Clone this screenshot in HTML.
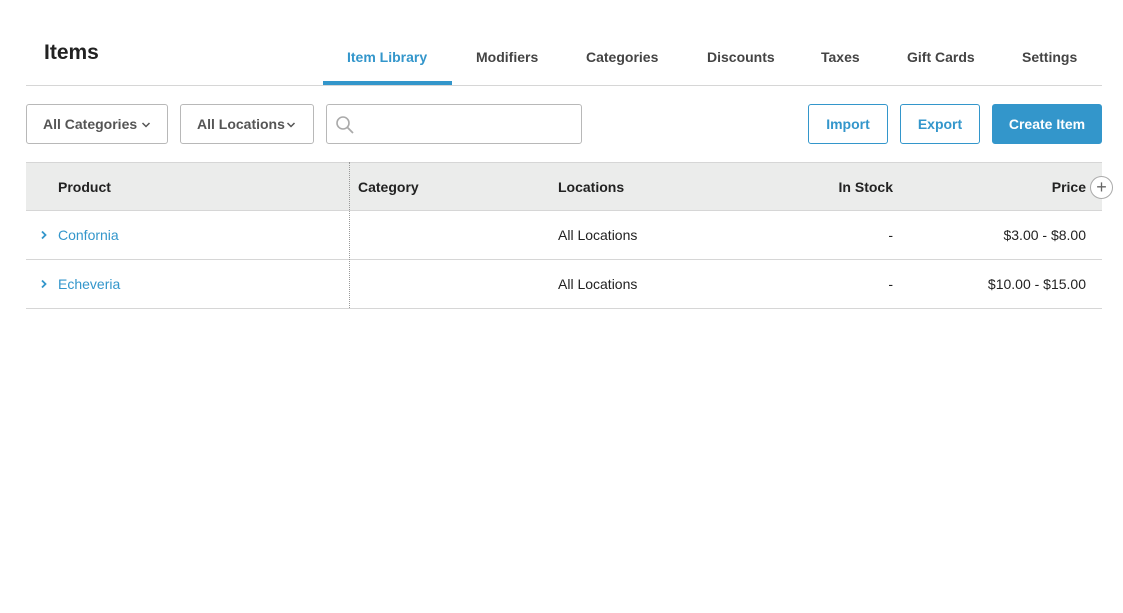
<!DOCTYPE html>
<html><head><style>
body{margin:0;width:1123px;height:613px;background:#fff;font-family:"Liberation Sans",sans-serif;color:#333;position:relative;overflow:hidden}
.a{position:absolute;white-space:nowrap}
.tab{position:absolute;top:49px;font-size:14px;font-weight:bold;color:#444}
.box{position:absolute;border:1px solid #b8b8b8;border-radius:3px;box-sizing:border-box;height:40px;top:104px}
.btn{position:absolute;top:104px;height:40px;box-sizing:border-box;border:1px solid #3396cb;border-radius:3px;color:#3396cb;font-size:14px;font-weight:bold;text-align:center;line-height:38px}
.hd{font-size:14px;font-weight:bold;color:#222}
.c{font-size:14px;color:#222}
.l{font-size:14px;color:#3396cb}
</style></head><body>
<div class="a" style="left:44px;top:41px;font-size:21px;font-weight:bold;color:#222">Items</div>
<div class="tab" style="left:347px;color:#3396cb">Item Library</div>
<div class="tab" style="left:476px">Modifiers</div>
<div class="tab" style="left:586px">Categories</div>
<div class="tab" style="left:707px">Discounts</div>
<div class="tab" style="left:821px">Taxes</div>
<div class="tab" style="left:907px">Gift Cards</div>
<div class="tab" style="left:1022px">Settings</div>
<div class="a" style="left:26px;top:85px;width:1076px;height:1px;background:#d6d6d6"></div>
<div class="a" style="left:323px;top:81px;width:129px;height:4px;background:#3396cb"></div>

<div class="box" style="left:26px;width:142px"><span class="a" style="left:16px;top:11px;font-size:14px;font-weight:bold;color:#555">All Categories</span>
<svg class="a" style="left:114px;top:16px" width="10" height="8"><path d="M1.5 2 L5 5.5 L8.5 2" fill="none" stroke="#555" stroke-width="1.5"/></svg></div>
<div class="box" style="left:180px;width:134px"><span class="a" style="left:16px;top:11px;font-size:14px;font-weight:bold;color:#555">All Locations</span>
<svg class="a" style="left:105px;top:16px" width="10" height="8"><path d="M1.5 2 L5 5.5 L8.5 2" fill="none" stroke="#555" stroke-width="1.5"/></svg></div>
<div class="box" style="left:326px;width:256px">
<svg class="a" style="left:8px;top:10px" width="20" height="20"><circle cx="8" cy="8" r="6" fill="none" stroke="#aaa" stroke-width="1.6"/><line x1="12.5" y1="12.5" x2="18" y2="18" stroke="#aaa" stroke-width="1.8"/></svg></div>
<div class="btn" style="left:808px;width:80px">Import</div>
<div class="btn" style="left:900px;width:80px">Export</div>
<div class="btn" style="left:992px;width:110px;background:#3396cb;color:#fff">Create Item</div>

<div class="a" style="left:26px;top:162px;width:1076px;height:49px;background:#ebeceb;border-top:1px solid #d6d6d6;border-bottom:1px solid #d6d6d6;box-sizing:border-box"></div>
<div class="a" style="left:26px;top:259px;width:1076px;height:1px;background:#d6d6d6"></div>
<div class="a" style="left:26px;top:308px;width:1076px;height:1px;background:#d6d6d6"></div>
<div class="a" style="left:349px;top:162px;height:146px;border-left:1px dotted #999"></div>

<div class="a hd" style="left:58px;top:179px">Product</div>
<div class="a hd" style="left:358px;top:179px">Category</div>
<div class="a hd" style="left:558px;top:179px">Locations</div>
<div class="a hd" style="right:230px;top:179px">In Stock</div>
<div class="a hd" style="right:37px;top:179px">Price</div>
<div class="a" style="left:1090px;top:176px;width:21px;height:21px;border:1px solid #aaa;border-radius:50%;background:#fff;text-align:center;line-height:20px;font-size:18px;color:#666">+</div>

<svg class="a" style="left:40px;top:230px" width="8" height="10"><path d="M2 1.5 L5.5 5 L2 8.5" fill="none" stroke="#3396cb" stroke-width="1.8"/></svg>
<div class="a l" style="left:58px;top:227px">Confornia</div>
<div class="a c" style="left:558px;top:227px">All Locations</div>
<div class="a c" style="right:230px;top:227px">-</div>
<div class="a c" style="right:37px;top:227px">$3.00 - $8.00</div>

<svg class="a" style="left:40px;top:279px" width="8" height="10"><path d="M2 1.5 L5.5 5 L2 8.5" fill="none" stroke="#3396cb" stroke-width="1.8"/></svg>
<div class="a l" style="left:58px;top:276px">Echeveria</div>
<div class="a c" style="left:558px;top:276px">All Locations</div>
<div class="a c" style="right:230px;top:276px">-</div>
<div class="a c" style="right:37px;top:276px">$10.00 - $15.00</div>
</body></html>
